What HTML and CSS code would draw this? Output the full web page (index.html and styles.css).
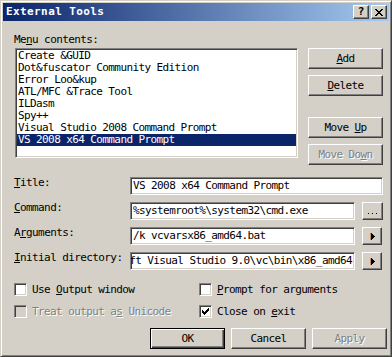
FILE: index.html
```html
<!DOCTYPE html>
<html>
<head>
<meta charset="utf-8">
<link rel="stylesheet" href="styles.css">
</head>
<body>
<div class="window">
  <div class="titlebar">
    <span class="title">External Tools</span>
    <div class="tbtns">
      <span class="tbtn help">?</span>
      <span class="tbtn close">
        <svg width="8" height="7" viewBox="0 0 8 7" shape-rendering="crispEdges"><path d="M0 0h2v1H0zM6 0h2v1H6zM1 1h2v1H1zM5 1h2v1H5zM2 2h4v1H2zM3 3h2v1H3zM2 4h4v1H2zM1 5h2v1H1zM5 5h2v1H5zM0 6h2v1H0zM6 6h2v1H6z" fill="#000"/></svg>
      </span>
    </div>
  </div>
  <div class="client">
    <div class="top">
      <div class="left">
        <div class="label">Me<u>n</u>u contents:</div>
        <div class="listbox">
          <div class="item">Create &amp;GUID</div>
          <div class="item">Dot&amp;fuscator Community Edition</div>
          <div class="item">Error Loo&amp;kup</div>
          <div class="item">ATL/MFC &amp;Trace Tool</div>
          <div class="item">ILDasm</div>
          <div class="item">Spy++</div>
          <div class="item">Visual Studio 2008 Command Prompt</div>
          <div class="item sel">VS 2008 x64 Command Prompt</div>
        </div>
      </div>
      <div class="side">
        <div class="btn side-btn"><span><u>A</u>dd</span></div>
        <div class="btn side-btn gap-s"><span><u>D</u>elete</span></div>
        <div class="btn side-btn gap-l"><span>Move <u>U</u>p</span></div>
        <div class="btn side-btn gap-s disabled"><span>Move Do<u>w</u>n</span></div>
      </div>
    </div>

    <div class="fields">
      <div class="flabel"><u>T</u>itle:</div>
      <div class="input wide">VS 2008 x64 Command Prompt</div>

      <div class="flabel"><u>C</u>ommand:</div>
      <div class="input">%systemroot%\system32\cmd.exe</div>
      <div class="btn fbtn dots">
        <svg width="9" height="1" viewBox="0 0 9 1" shape-rendering="crispEdges"><path d="M0 0h1v1H0zM4 0h1v1H4zM8 0h1v1H8z" fill="#000"/></svg>
      </div>

      <div class="flabel">A<u>r</u>guments:</div>
      <div class="input">/k vcvarsx86_amd64.bat</div>
      <div class="btn fbtn arrow">
        <svg width="5" height="7" viewBox="0 0 5 7" shape-rendering="crispEdges"><path d="M0 0h1v7H0z" fill="#c89060"/><path d="M1 0h1v7H1zM2 1h1v5H2zM3 2h1v3H3zM4 3h1v1H4z" fill="#000"/></svg>
      </div>

      <div class="flabel"><u>I</u>nitial directory:</div>
      <div class="input clipleft"><span>ft Visual Studio 9.0\vc\bin\x86_amd64</span></div>
      <div class="btn fbtn arrow">
        <svg width="5" height="7" viewBox="0 0 5 7" shape-rendering="crispEdges"><path d="M0 0h1v7H0z" fill="#c89060"/><path d="M1 0h1v7H1zM2 1h1v5H2zM3 2h1v3H3zM4 3h1v1H4z" fill="#000"/></svg>
      </div>
    </div>

    <div class="checks">
      <div class="check"><span class="cbox"></span><span>Use <u>O</u>utput window</span></div>
      <div class="check"><span class="cbox"></span><span><u>P</u>rompt for arguments</span></div>
      <div class="check disabled"><span class="cbox"></span><span>Treat output a<u>s</u> Unicode</span></div>
      <div class="check"><span class="cbox">
        <svg width="7" height="7" viewBox="0 0 7 7" shape-rendering="crispEdges"><path d="M6 0h1v1H6zM5 1h2v1H5zM0 2h1v1H0zM4 2h3v1H4zM0 3h2v1H0zM3 3h3v1H3zM0 4h5v1H0zM1 5h3v1H1zM2 6h1v1H2z" fill="#000"/></svg>
      </span><span>Close on <u>e</u>xit</span></div>
    </div>

    <div class="actions">
      <div class="btn act default"><span>OK</span></div>
      <div class="btn act"><span>Cancel</span></div>
      <div class="btn act disabled"><span>Apply</span></div>
    </div>
  </div>
</div>
</body>
</html>
```

FILE: styles.css
```css
html, body {
  margin: 0;
  padding: 0;
  background: #D4D0C8;
}

.window {
  width: 392px;
  height: 357px;
  box-sizing: border-box;
  background: #D4D0C8;
  border: 1px solid;
  border-color: #D4D0C8 #404040 #404040 #D4D0C8;
  box-shadow: inset 1px 1px 0 #FFFFFF, inset -1px -1px 0 #808080;
  padding: 2px;
  display: flex;
  flex-direction: column;
  font-family: "DejaVu Sans Mono", monospace;
  font-size: 11px;
  line-height: 12px;
  letter-spacing: -0.6px;
  color: #000;
}

u {
  text-decoration: underline;
  text-underline-offset: 1px;
}

.titlebar {
  height: 18px;
  flex: none;
  display: flex;
  align-items: center;
  justify-content: space-between;
  background: linear-gradient(to right, #0A246A, #A6CAF0);
  padding: 0 2px 0 3px;
}

.title {
  color: #FFFFFF;
  font-weight: bold;
  letter-spacing: 0.4px;
}

.tbtns {
  display: flex;
  gap: 2px;
}

.tbtn {
  width: 16px;
  height: 14px;
  box-sizing: border-box;
  background: #D4D0C8;
  border: 1px solid;
  border-color: #FFFFFF #404040 #404040 #FFFFFF;
  box-shadow: inset -1px -1px 0 #808080;
  display: flex;
  align-items: center;
  justify-content: center;
}

.tbtn.help {
  font-weight: bold;
  letter-spacing: 0;
  line-height: 12px;
}

.client {
  flex: 1;
  display: flex;
  flex-direction: column;
  padding: 13px 6px 0 12px;
}

.top {
  display: flex;
  gap: 10px;
}

.left {
  width: 283px;
  display: flex;
  flex-direction: column;
  gap: 2px;
}

.label {
  height: 12px;
  margin-left: -1px;
}

.listbox {
  height: 110px;
  box-sizing: border-box;
  background: #FFFFFF;
  border: 1px solid;
  border-color: #808080 #FFFFFF #FFFFFF #808080;
  box-shadow: inset 1px 1px 0 #404040, inset -1px -1px 0 #D4D0C8;
  padding: 1px;
  overflow: hidden;
}

.item {
  height: 12px;
  padding-left: 1px;
  white-space: nowrap;
  overflow: hidden;
}

.item.sel {
  background: #0A246A;
  color: #FFFFFF;
}

.side {
  width: 75px;
  padding-top: 14px;
  display: flex;
  flex-direction: column;
}

.btn {
  box-sizing: border-box;
  background: #D4D0C8;
  border: 1px solid;
  border-color: #FFFFFF #404040 #404040 #FFFFFF;
  box-shadow: inset -1px -1px 0 #808080;
  display: flex;
  align-items: center;
  justify-content: center;
  white-space: nowrap;
}

.side-btn {
  height: 21px;
}

.gap-s { margin-top: 6px; }
.gap-l { margin-top: 21px; }

.disabled {
  color: #808080;
  text-shadow: 1px 1px 0 #FFFFFF;
}

.fields {
  margin-top: 12px;
  display: grid;
  grid-template-columns: 108px 225px 21px;
  column-gap: 7px;
  row-gap: 7px;
  grid-auto-rows: 18px;
}

.flabel {
  margin-left: -1px;
  white-space: nowrap;
}

.input {
  box-sizing: border-box;
  height: 18px;
  background: #FFFFFF;
  border: 1px solid;
  border-color: #808080 #FFFFFF #FFFFFF #808080;
  box-shadow: inset 1px 1px 0 #404040, inset -1px -1px 0 #D4D0C8;
  padding: 2px 2px;
  white-space: nowrap;
  overflow: hidden;
}

.input.wide {
  grid-column: 2 / 4;
}

.input.clipleft {
  display: flex;
  justify-content: flex-end;
}

.input.clipleft span {
  flex: none;
}

.fbtn {
  height: 18px;
}

.fbtn.dots {
  align-items: flex-end;
  padding-bottom: 5px;
}

.fbtn.arrow {
  width: 20px;
}

.checks {
  margin-top: 13px;
  margin-left: -1px;
  display: grid;
  grid-template-columns: 185px 1fr;
  grid-auto-rows: 13px;
  row-gap: 9px;
}

.check {
  display: flex;
  align-items: center;
  gap: 5px;
  white-space: nowrap;
}

.cbox {
  width: 13px;
  height: 13px;
  flex: none;
  box-sizing: border-box;
  background: #FFFFFF;
  border: 1px solid;
  border-color: #808080 #FFFFFF #FFFFFF #808080;
  box-shadow: inset 1px 1px 0 #404040, inset -1px -1px 0 #D4D0C8;
  display: flex;
  align-items: center;
  justify-content: center;
}

.check.disabled .cbox {
  background: #D4D0C8;
}

.actions {
  margin-top: 10px;
  margin-right: -4px;
  display: flex;
  justify-content: flex-end;
  gap: 6px;
}

.act {
  width: 75px;
  height: 21px;
}

.act.default {
  border-color: #000000;
  box-shadow: inset 1px 1px 0 #FFFFFF, inset -1px -1px 0 #404040, inset -2px -2px 0 #808080;
}
```
